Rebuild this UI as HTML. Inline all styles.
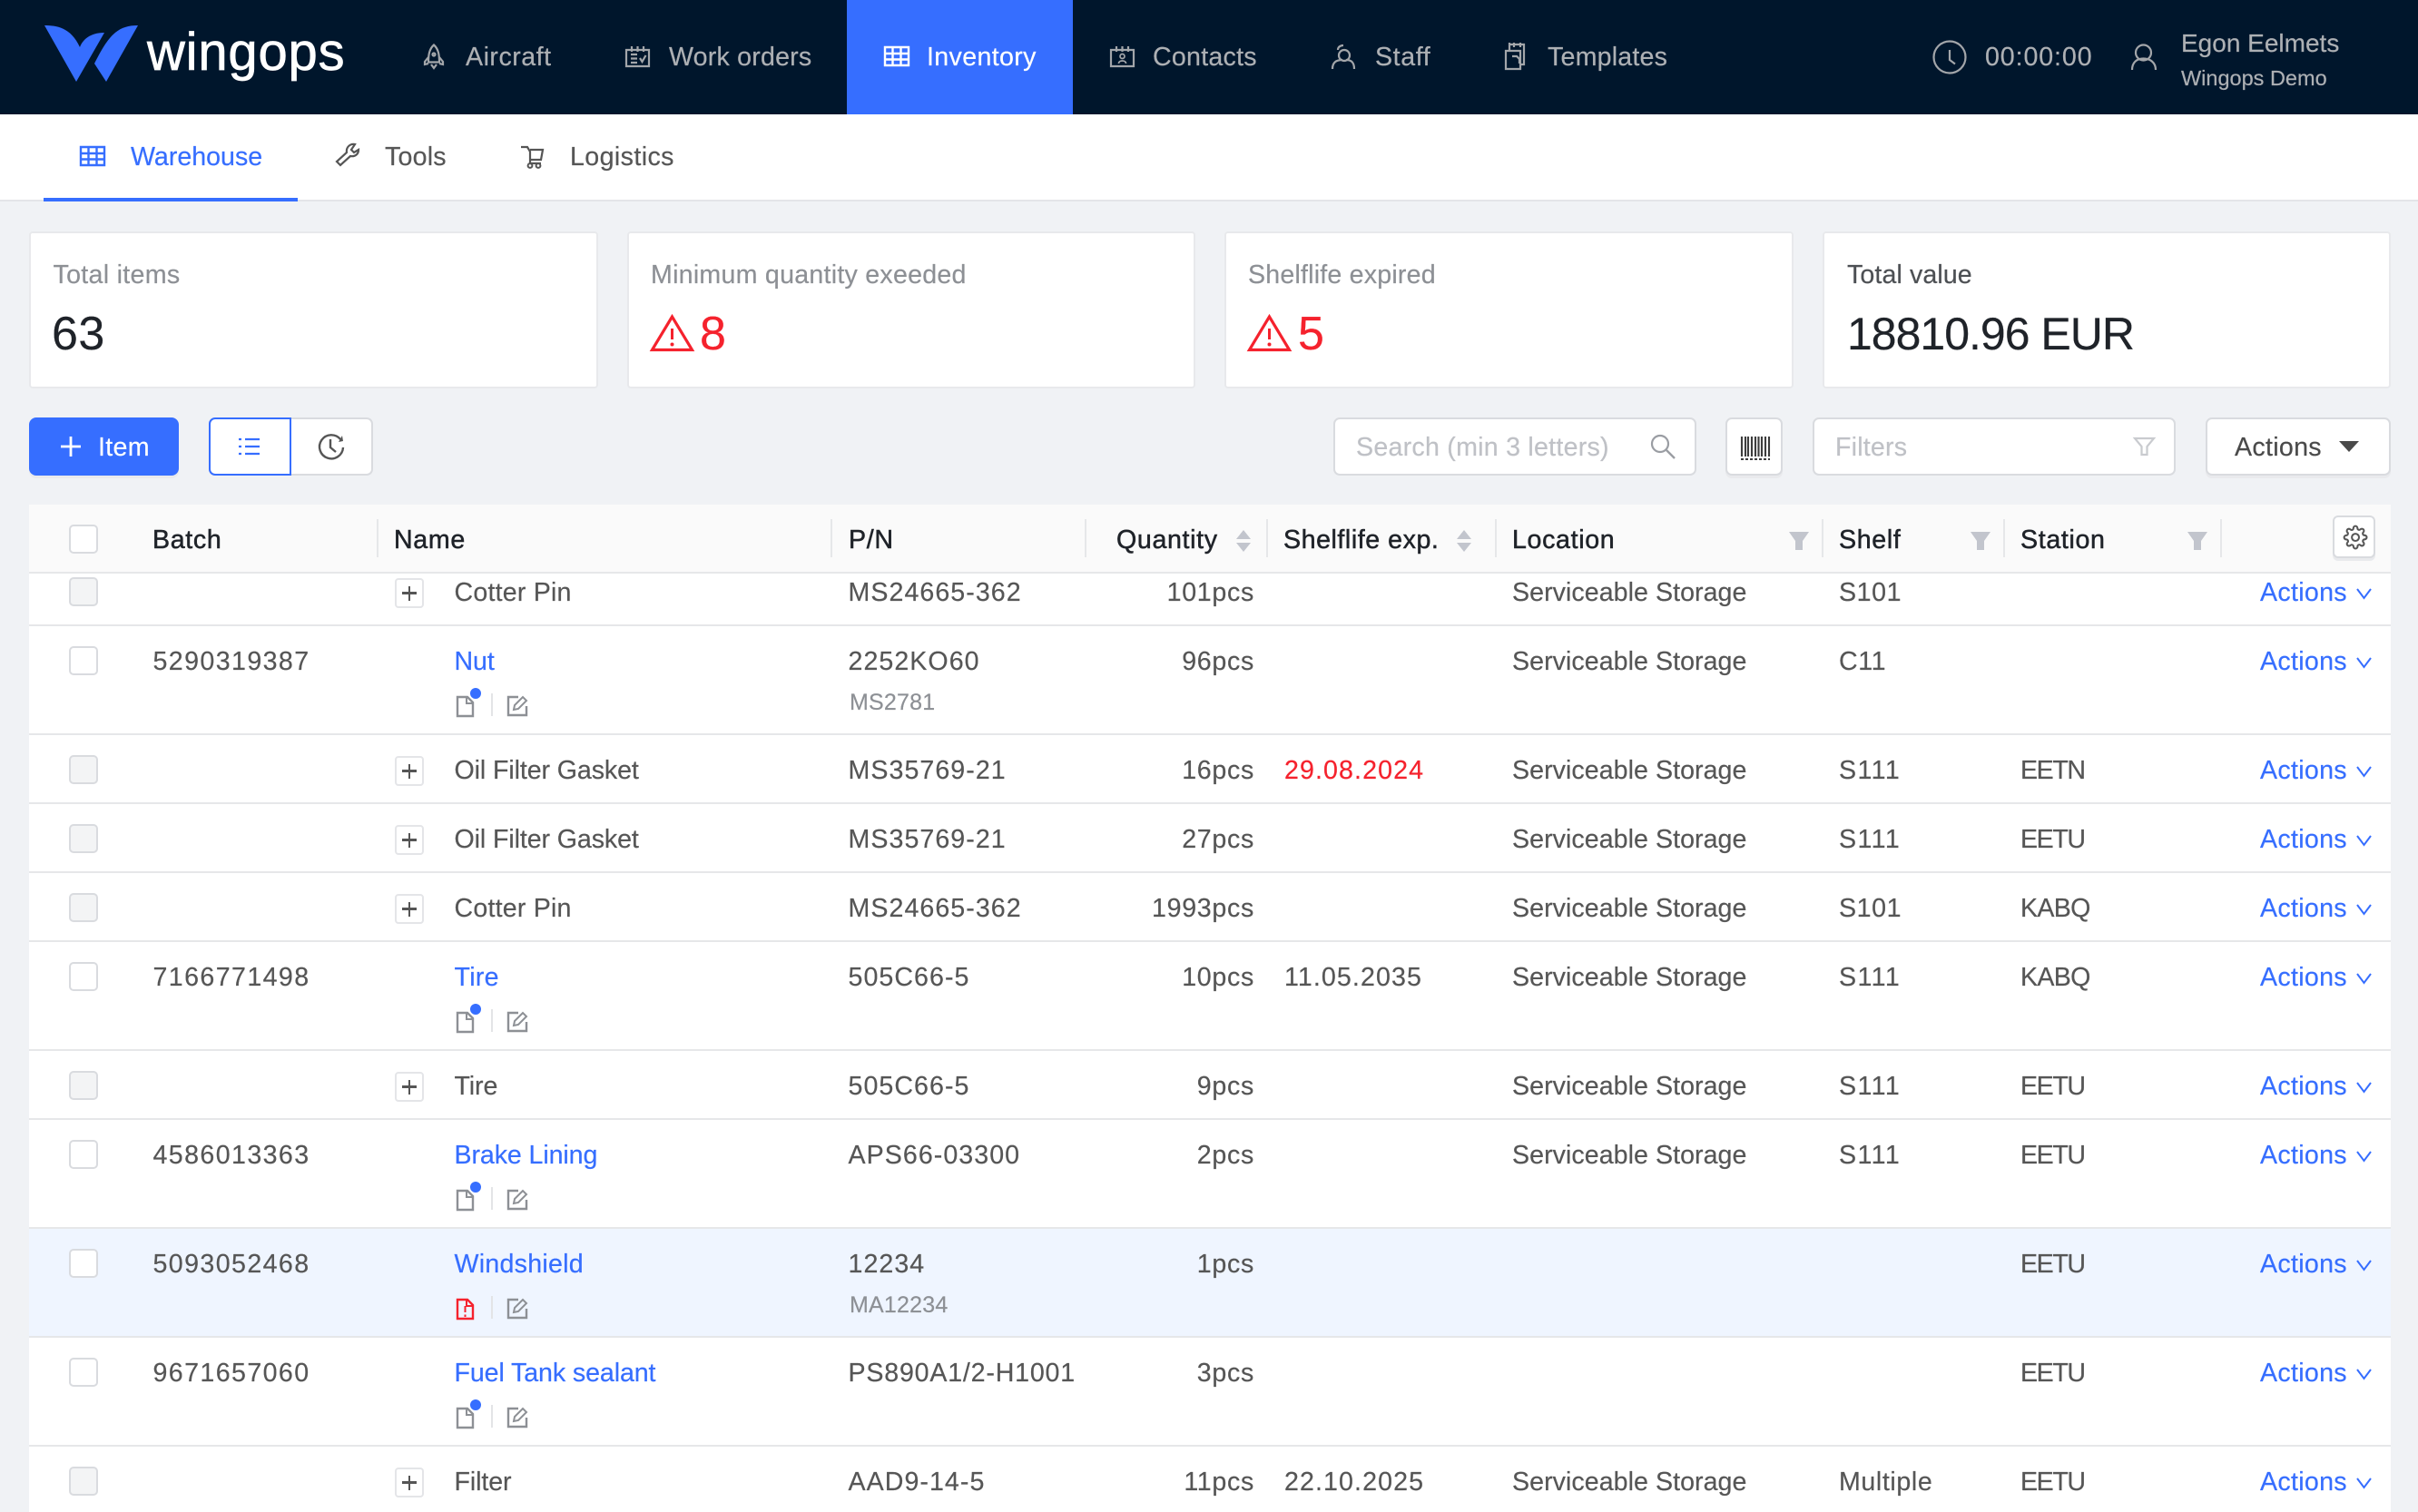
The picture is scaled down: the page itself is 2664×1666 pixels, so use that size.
<!DOCTYPE html>
<html><head><meta charset="utf-8"><title>Wingops</title>
<style>
html,body{margin:0;padding:0}
body{width:2664px;height:1666px;overflow:hidden;position:relative;background:#f0f2f5;font-family:"Liberation Sans",Arial,sans-serif;font-size:28.6px;color:#565656;-webkit-text-stroke-width:.2px}
.x,.row>span{position:absolute;line-height:40px;white-space:nowrap}
.box{position:absolute;box-sizing:border-box}
.nav{color:#adb0b4;top:43px;letter-spacing:.2px}
.tab{color:#565656;top:153px;letter-spacing:.2px}
.card{position:absolute;box-sizing:border-box;top:255px;height:173px;background:#fff;border:2px solid #e8e9ec;border-radius:4px;width:627px}
.lab{color:#8d9095;top:283px}
.val{top:348px;font-size:52px;line-height:40px;color:#1f2329}
.ctl{position:absolute;box-sizing:border-box;top:460px;height:64px;background:#fff;border:2px solid #d9dbdf;border-radius:7px}
.sh{box-shadow:0 3px 0 #e9eaed}
.th{top:575px;color:#1f2329;font-weight:400;-webkit-text-stroke:.5px #1f2329;letter-spacing:.65px}
.sep{position:absolute;top:572px;width:2px;height:42px;background:#e6e7e9}
.row{position:absolute;left:0;width:2664px}
.row span{top:19px}
.ln{position:absolute;left:32px;width:2602px;height:2px;background:#e6e7e9}
.row .b{left:168.5px;letter-spacing:1.4px}
.row .n{left:500.5px;letter-spacing:-.1px}
.row .k{left:500.5px;color:#366eff;letter-spacing:-.1px}
.row .p{left:934.5px;letter-spacing:1.05px}
.row .m{left:936px;top:64px;font-size:25px;color:#8d9095;letter-spacing:.2px}
.row .q{left:1182px;width:200px;text-align:right;letter-spacing:.7px}
.row .d{left:1415px;letter-spacing:1.1px}
.row .l{left:1666px;letter-spacing:.05px}
.row .s{left:2026px;letter-spacing:.6px}
.row .s1{letter-spacing:1.4px}
.row .t{left:2226px;letter-spacing:-1.4px}
.row .a{left:2490px;color:#366eff;letter-spacing:.3px}
.row i{position:absolute;left:76px;top:22px;width:32px;height:32px;box-sizing:border-box;border:2px solid #d9dbdf;border-radius:5px;background:#fff}
.row i.g{background:#f3f4f5}
.row b{position:absolute;left:435px;top:23px;width:32px;height:33px;box-sizing:border-box;border:2px solid #e4e5e8;border-radius:4px;background:#fff}
.row b:before{content:"";position:absolute;left:6px;top:13.300px;width:16px;height:2.800px;background:#555}
.row b:after{content:"";position:absolute;left:12.600px;top:6.700px;width:2.800px;height:16px;background:#555}
</style></head>
<body>
<!-- top bar -->
<div class="box" style="left:0;top:0;width:2664px;height:126px;background:#00162c"></div>
<div class="box" style="left:933px;top:0;width:249px;height:126px;background:#366eff"></div>
<div class="x" style="left:162px;top:33px;font-size:58px;line-height:50px;color:#fff;letter-spacing:.8px;-webkit-text-stroke:.7px #fff">wingops</div>
<div class="x nav" style="left:513px;letter-spacing:.5px">Aircraft</div>
<div class="x nav" style="left:737px">Work orders</div>
<div class="x nav" style="left:1021px;color:#fff;letter-spacing:.35px">Inventory</div>
<div class="x nav" style="left:1270px;letter-spacing:.25px">Contacts</div>
<div class="x nav" style="left:1515px;letter-spacing:.6px">Staff</div>
<div class="x nav" style="left:1705px;letter-spacing:.2px">Templates</div>
<div class="x nav" style="left:2187px;letter-spacing:.9px">00:00:00</div>
<div class="x nav" style="left:2403px;top:28px;font-size:28px;letter-spacing:0">Egon Eelmets</div>
<div class="x nav" style="left:2403px;top:66px;font-size:23.500px;letter-spacing:0">Wingops Demo</div>

<!-- sub nav -->
<div class="box" style="left:0;top:126px;width:2664px;height:94px;background:#fff"></div>
<div class="box" style="left:0;top:220px;width:2664px;height:2px;background:#e4e5e8"></div>
<div class="box" style="left:48px;top:218px;width:280px;height:4px;background:#366eff"></div>
<div class="x tab" style="left:144px;color:#366eff;letter-spacing:0">Warehouse</div>
<div class="x tab" style="left:424px">Tools</div>
<div class="x tab" style="left:628px;letter-spacing:.4px">Logistics</div>

<!-- cards -->
<div class="card" style="left:32px"></div>
<div class="card" style="left:691px;width:626px"></div>
<div class="card" style="left:1349px"></div>
<div class="card" style="left:2008px;width:626px"></div>
<div class="x lab" style="left:58.500px;letter-spacing:.3px">Total items</div>
<div class="x lab" style="left:717px;letter-spacing:.25px">Minimum quantity exeeded</div>
<div class="x lab" style="left:1375px;letter-spacing:.2px">Shelflife expired</div>
<div class="x lab" style="left:2035px;color:#4d5054;letter-spacing:.1px">Total value</div>
<div class="x val" style="left:57px;letter-spacing:.5px">63</div>
<div class="x val" style="left:771px;color:#f5222d">8</div>
<div class="x val" style="left:1430px;color:#f5222d">5</div>
<div class="x val" style="left:2035px;font-size:50px;letter-spacing:-1px">18810.96 EUR</div>

<!-- toolbar -->
<div class="box sh" style="left:32px;top:460px;width:165px;height:64px;background:#366eff;border-radius:8px"></div>
<div class="x" style="left:108px;top:473px;color:#fff;letter-spacing:.3px">Item</div>
<div class="ctl" style="left:320px;width:91px;border-left:0;border-radius:0 7px 7px 0"></div>
<div class="ctl" style="left:230px;width:91px;border-color:#366eff;border-radius:7px 0 0 7px"></div>
<div class="ctl" style="left:1469px;width:400px"></div>
<div class="x" style="left:1494px;top:473px;color:#bfc1c6;letter-spacing:.25px">Search (min 3 letters)</div>
<div class="ctl sh" style="left:1901px;width:63px"></div>
<div class="ctl" style="left:1997px;width:400px"></div>
<div class="x" style="left:2022px;top:473px;color:#bfc1c6;letter-spacing:.2px">Filters</div>
<div class="ctl sh" style="left:2430px;width:204px"></div>
<div class="x" style="left:2462px;top:473px;color:#4a4a4a;letter-spacing:.3px">Actions</div>

<!-- table -->
<div class="box" style="left:32px;top:556px;width:2602px;height:1110px;background:#fff"></div>
<div class="box" style="left:32px;top:1354px;width:2602px;height:118px;background:#eff5ff"></div>

<div class="row" style="top:614px"><i class="g"></i><b></b><span class="n" style="letter-spacing:.2px">Cotter Pin</span><span class="p">MS24665-362</span><span class="q">101pcs</span><span class="l">Serviceable Storage</span><span class="s">S101</span><span class="a">Actions</span></div>
<div class="ln" style="top:688px"></div>
<div class="row" style="top:690px"><i></i><span class="b">5290319387</span><span class="k">Nut</span><span class="p">2252KO60</span><span class="m">MS2781</span><span class="q">96pcs</span><span class="l">Serviceable Storage</span><span class="s">C11</span><span class="a">Actions</span></div>
<div class="ln" style="top:808px"></div>
<div class="row" style="top:810px"><i class="g"></i><b></b><span class="n">Oil Filter Gasket</span><span class="p">MS35769-21</span><span class="q">16pcs</span><span class="d" style="color:#f5222d">29.08.2024</span><span class="l">Serviceable Storage</span><span class="s s1">S111</span><span class="t">EETN</span><span class="a">Actions</span></div>
<div class="ln" style="top:884px"></div>
<div class="row" style="top:886px"><i class="g"></i><b></b><span class="n">Oil Filter Gasket</span><span class="p">MS35769-21</span><span class="q">27pcs</span><span class="l">Serviceable Storage</span><span class="s s1">S111</span><span class="t">EETU</span><span class="a">Actions</span></div>
<div class="ln" style="top:960px"></div>
<div class="row" style="top:962px"><i class="g"></i><b></b><span class="n" style="letter-spacing:.2px">Cotter Pin</span><span class="p">MS24665-362</span><span class="q">1993pcs</span><span class="l">Serviceable Storage</span><span class="s">S101</span><span class="t" style="letter-spacing:-.7px">KABQ</span><span class="a">Actions</span></div>
<div class="ln" style="top:1036px"></div>
<div class="row" style="top:1038px"><i></i><span class="b">7166771498</span><span class="k" style="letter-spacing:.3px">Tire</span><span class="p">505C66-5</span><span class="q">10pcs</span><span class="d">11.05.2035</span><span class="l">Serviceable Storage</span><span class="s s1">S111</span><span class="t" style="letter-spacing:-.7px">KABQ</span><span class="a">Actions</span></div>
<div class="ln" style="top:1156px"></div>
<div class="row" style="top:1158px"><i class="g"></i><b></b><span class="n">Tire</span><span class="p">505C66-5</span><span class="q">9pcs</span><span class="l">Serviceable Storage</span><span class="s s1">S111</span><span class="t">EETU</span><span class="a">Actions</span></div>
<div class="ln" style="top:1232px"></div>
<div class="row" style="top:1234px"><i></i><span class="b">4586013363</span><span class="k">Brake Lining</span><span class="p">APS66-03300</span><span class="q">2pcs</span><span class="l">Serviceable Storage</span><span class="s s1">S111</span><span class="t">EETU</span><span class="a">Actions</span></div>
<div class="ln" style="top:1352px"></div>
<div class="row" style="top:1354px"><i></i><span class="b">5093052468</span><span class="k" style="letter-spacing:.25px">Windshield</span><span class="p">12234</span><span class="m">MA12234</span><span class="q">1pcs</span><span class="t">EETU</span><span class="a">Actions</span></div>
<div class="ln" style="top:1472px"></div>
<div class="row" style="top:1474px"><i></i><span class="b">9671657060</span><span class="k">Fuel Tank sealant</span><span class="p" style="letter-spacing:.8px">PS890A1/2-H1001</span><span class="q">3pcs</span><span class="t">EETU</span><span class="a">Actions</span></div>
<div class="ln" style="top:1592px"></div>
<div class="row" style="top:1594px"><i class="g"></i><b></b><span class="n">Filter</span><span class="p">AAD9-14-5</span><span class="q">11pcs</span><span class="d">22.10.2025</span><span class="l">Serviceable Storage</span><span class="s">Multiple</span><span class="t">EETU</span><span class="a">Actions</span></div>

<!-- table header -->
<div class="box" style="left:32px;top:556px;width:2602px;height:74px;background:#fafafa"></div>
<div class="box" style="left:32px;top:630px;width:2602px;height:2px;background:#e6e7e9"></div>
<div class="box" style="left:76px;top:578px;width:32px;height:32px;border:2px solid #d9dbdf;border-radius:5px;background:#fff"></div>
<div class="sep" style="left:415px"></div><div class="sep" style="left:915px"></div><div class="sep" style="left:1195px"></div><div class="sep" style="left:1395px"></div><div class="sep" style="left:1647px"></div><div class="sep" style="left:2007px"></div><div class="sep" style="left:2207px"></div><div class="sep" style="left:2446px"></div>
<div class="x th" style="left:168px">Batch</div>
<div class="x th" style="left:434px">Name</div>
<div class="x th" style="left:935px">P/N</div>
<div class="x th" style="left:1230px">Quantity</div>
<div class="x th" style="left:1414px;letter-spacing:.55px">Shelflife exp.</div>
<div class="x th" style="left:1666px">Location</div>
<div class="x th" style="left:2026px">Shelf</div>
<div class="x th" style="left:2226px">Station</div>
<div class="box sh" style="left:2570px;top:568px;width:47px;height:47px;border:2px solid #d9dbdf;border-radius:6px;background:#fff"></div>

<!-- all icons -->
<svg style="position:absolute;left:0;top:0" width="2664" height="1666" viewBox="0 0 2664 1666" fill="none">
<defs>
<g id="chev"><path d="M0 0l7.500 10L15 0" stroke="#366eff" stroke-width="2"/></g>
<g id="edit" stroke="#8d9095" stroke-width="2.400"><path d="M571 768H560v20h20V778"/><path d="M566 782l1-5 9-9 4 4-9 9z" stroke-width="2"/></g>
<g id="doc"><path d="M504 768h11l6 6v15h-17z" stroke="#8d9095" stroke-width="2.400"/><path d="M514 768v7h7" stroke="#8d9095" stroke-width="2"/><circle cx="524" cy="764" r="6" fill="#366eff"/><path d="M542 764v25" stroke="#e3e4e6" stroke-width="2"/></g>
<g id="gridi"><path d="M1 1h26v20H1zM1 8h26M1 14.500h26M9.500 1v20M18.500 1v20" stroke-width="2.400"/></g>
<g id="funnel"><path d="M0 0h22l-7 10v10H7V10z" fill="#c2c5cd"/></g>
<g id="sort"><path d="M-8 10l8-10 8 10zM-8 14l8 10 8-10z" fill="#c2c5cd"/></g>
</defs>
<!-- logo -->
<path d="M49 28C62 28 78 30 88 52C91 44 99 36 115 36L84 90Z" fill="#366eff"/>
<path d="M152 28C130 28 120 38 104 70L117 90Z" fill="#366eff"/>
<!-- nav icons -->
<g stroke="#a3a6aa" stroke-width="2.200">
<path d="M478 49.500C473 54 472 60 472 68.500H484C484 60 483 54 478 49.500Z"/><path d="M472 63l-4 5v3l4-1M484 63l4 5v3l-4-1M475 71l3 4 3-4"/><circle cx="478" cy="60" r="1.500"/>
<path d="M690 55h25v18h-25zM696 51v6M702.500 51v6M709 51v6M695 60h7M695 64.500h7M695 69h7M705 64l2.500 4 4-7"/>
<path d="M1224 55h25v18h-25zM1230 51v6M1236.500 51v6M1243 51v6"/><circle cx="1236.500" cy="62" r="2.500" stroke-width="1.700"/><path d="M1232.500 70c0-4 8-4 8 0" stroke-width="1.700"/>
<circle cx="1481" cy="61" r="6"/><path d="M1468 76c0-8 5-10 11-10M1492 76c0-8-4-10-9-10M1474 55c0-4 4-5 6-5"/>
<path d="M1659 56h16v20h-16zM1663 56v-7h16v22h-4M1663 49v-2M1668 52v-5M1675 52v-5M1666 62h5l3 3v5"/>
<circle cx="2148" cy="63" r="17.500"/><path d="M2148 55v11l6 4.500"/>
<circle cx="2361.500" cy="58" r="8.500"/><path d="M2349 77c0-8 5-12.500 12.500-12.500S2375 69 2375 77"/>
</g>
<use href="#gridi" x="974" y="51" stroke="#fff"/>
<!-- subnav icons -->
<use href="#gridi" x="88" y="161" stroke="#366eff"/>
<path d="M371 178l4 4 11-10c5 1 9-2 9-7l-5 3-3-3 4-6c-5-1-10 3-9 9z" stroke="#555" stroke-width="2.200"/>
<path d="M574 162h7l3 5v13h12M584 165h14l-2 11h-12" stroke="#555" stroke-width="2.200"/><circle cx="584" cy="182.500" r="2.400" stroke="#555" stroke-width="2"/><circle cx="593" cy="182.500" r="2.400" stroke="#555" stroke-width="2"/>
<!-- warnings -->
<g id="w"><path d="M740.500 349L718.500 385.500H762.500Z" stroke="#f5222d" stroke-width="3.200"/><path d="M740.500 362v12" stroke="#f5222d" stroke-width="3"/><circle cx="740.500" cy="379.500" r="2" fill="#f5222d"/></g>
<use href="#w" x="658"/>
<!-- toolbar icons -->
<path d="M78 481v22M67 492h22" stroke="#fff" stroke-width="2.800"/>
<path d="M270 484h16M270 492h16M270 500h16M263 484h3M263 492h3M263 500h3" stroke="#366eff" stroke-width="2.200"/>
<path d="M375 484a13 13 0 1 0 3 9" stroke="#555" stroke-width="2.400"/><path d="M364 484v9l6 5" stroke="#555" stroke-width="2.400"/><path d="M373 487l5-1-1-6z" fill="#555"/>
<circle cx="1829" cy="489" r="9" stroke="#9a9da3" stroke-width="2.200"/><path d="M1836 496l9 9" stroke="#9a9da3" stroke-width="2.400"/>
<path d="M1919 481v22M1923 481v22M1926 481v22M1930 481v22M1934 481v22M1937.500 481v22M1941 481v22M1945 481v22M1949 481v22" stroke="#3d3d3d" stroke-width="2.100"/><path d="M1918 506h32" stroke="#3d3d3d" stroke-width="2" stroke-dasharray="3 2"/>
<path d="M2352 483h21l-7.500 9v9h-6v-9z" stroke="#c9cbcf" stroke-width="2.200"/>
<path d="M2577 486h22l-11 12z" fill="#4a4a4a"/>
<!-- header icons -->
<use href="#sort" x="1370" y="584"/>
<use href="#sort" x="1613" y="584"/>
<use href="#funnel" x="1971" y="586"/><use href="#funnel" x="2171" y="586"/><use href="#funnel" x="2410" y="586"/>
<g transform="translate(2581.500 578.500) scale(1.130)" stroke="#555" stroke-width="1.800"><circle cx="12" cy="12" r="3.500"/><path d="M19.400 15a1.650 1.650 0 0 0 .33 1.820l.06.06a2 2 0 0 1 0 2.830 2 2 0 0 1-2.830 0l-.06-.06a1.650 1.650 0 0 0-1.820-.33 1.650 1.650 0 0 0-1 1.510V21a2 2 0 0 1-2 2 2 2 0 0 1-2-2v-.09A1.650 1.650 0 0 0 9 19.400a1.650 1.650 0 0 0-1.820.33l-.06.06a2 2 0 0 1-2.830 0 2 2 0 0 1 0-2.830l.06-.06a1.650 1.650 0 0 0 .33-1.820 1.650 1.650 0 0 0-1.510-1H3a2 2 0 0 1-2-2 2 2 0 0 1 2-2h.09A1.650 1.650 0 0 0 4.600 9a1.650 1.650 0 0 0-.33-1.820l-.06-.06a2 2 0 0 1 0-2.830 2 2 0 0 1 2.830 0l.06.06a1.650 1.650 0 0 0 1.820.33H9a1.650 1.650 0 0 0 1-1.510V3a2 2 0 0 1 2-2 2 2 0 0 1 2 2v.09a1.650 1.650 0 0 0 1 1.510 1.650 1.650 0 0 0 1.820-.33l.06-.06a2 2 0 0 1 2.830 0 2 2 0 0 1 0 2.830l-.06.06a1.650 1.650 0 0 0-.33 1.820V9a1.650 1.650 0 0 0 1.510 1H21a2 2 0 0 1 2 2 2 2 0 0 1-2 2h-.09a1.650 1.650 0 0 0-1.510 1z"/></g>
<!-- chevrons -->
<use href="#chev" x="2597" y="649"/><use href="#chev" x="2597" y="725"/><use href="#chev" x="2597" y="845"/><use href="#chev" x="2597" y="921"/><use href="#chev" x="2597" y="997"/><use href="#chev" x="2597" y="1073"/><use href="#chev" x="2597" y="1193"/><use href="#chev" x="2597" y="1269"/><use href="#chev" x="2597" y="1389"/><use href="#chev" x="2597" y="1509"/><use href="#chev" x="2597" y="1629"/>
<!-- doc + edit icons -->
<use href="#doc"/><use href="#edit"/>
<use href="#doc" y="348"/><use href="#edit" y="348"/>
<use href="#doc" y="544"/><use href="#edit" y="544"/>
<use href="#doc" y="784"/><use href="#edit" y="784"/>
<use href="#edit" y="664"/>
<path d="M504 1432h11l6 6v15h-17z" stroke="#f5222d" stroke-width="2.400"/><path d="M514 1432v7h7" stroke="#f5222d" stroke-width="2"/><path d="M512.500 1439v7M512.500 1448.500v2.500" stroke="#f5222d" stroke-width="2"/><path d="M542 1428v25" stroke="#e3e4e6" stroke-width="2"/>
</svg>
</body></html>
